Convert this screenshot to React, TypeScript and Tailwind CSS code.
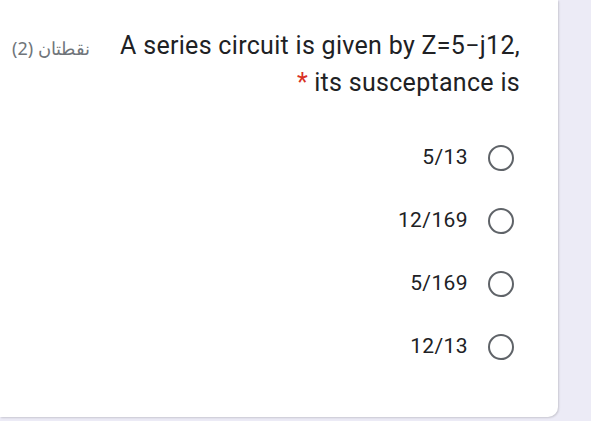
export default function App() {
  const options = ['5/13', '12/169', '5/169', '12/13']

  return (
    <div className="w-[591px] h-[421px] bg-[#ecebf6] overflow-hidden" style={{ fontFamily: 'Roboto, "Noto Sans", sans-serif' }}>
      <div className="w-[558px] h-[417px] bg-white rounded-br-[10px] shadow-[1px_1px_2px_rgba(0,0,0,0.15)] pt-[27px]">
        <div className="flex justify-between items-start pr-[38px]">
          <div dir="rtl" className="pl-[12px] pt-[8px] text-[18px] text-[#70757a] whitespace-nowrap" style={{ fontFamily: '"Noto Sans", Roboto, sans-serif' }}>
            نقطتان (2)
          </div>
          <div className="text-right text-[25px] tracking-[0.3px] leading-[37px] text-[#202124]">
            <div>A series circuit is given by Z=5−j12,</div>
            <div>
              <span className="text-[#d93025] mr-[6px]">*</span>its susceptance is
            </div>
          </div>
        </div>
        <div className="mt-[25px] pr-[44px] flex flex-col items-end">
          {options.map(o => (
            <div key={o} className="h-[63px] flex items-center gap-[20px]">
              <span className="text-[21px] tracking-[0.4px] text-[#202124]">{o}</span>
              <span className="w-[26px] h-[26px] rounded-full border-[2.5px] border-[#5f6368]" />
            </div>
          ))}
        </div>
      </div>
    </div>
  )
}
